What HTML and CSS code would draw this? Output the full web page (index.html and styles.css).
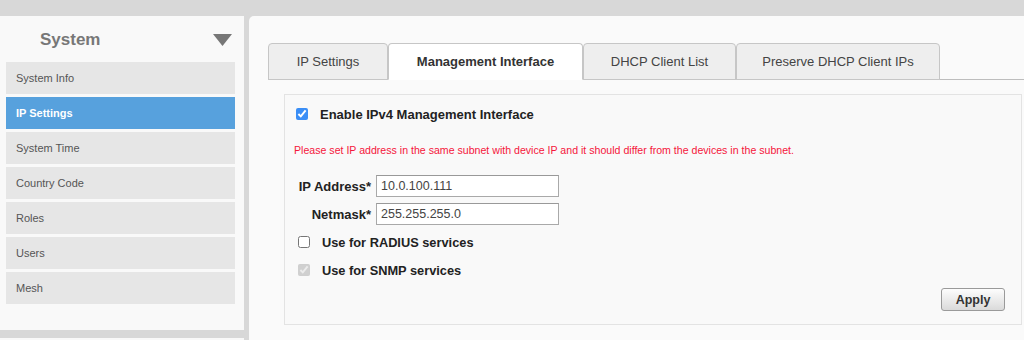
FILE: index.html
```html
<!DOCTYPE html>
<html lang="en">
<head>
    <meta charset="UTF-8">
    <meta name="viewport" content="width=device-width, initial-scale=1.0">
    <title>System - Management Interface</title>

    <link rel="stylesheet" href="styles.css">
</head>
<body>

  <div class="page">
    <div class="side">
      <div class="menu">
        <div class="menu-head">
          <span class="menu-title">System</span>
          <svg class="caret" width="19" height="12" viewBox="0 0 19 12"><polygon points="0,0 19,0 9.5,12" fill="#777"/></svg>
        </div>
        <a class="item">System Info</a>
        <a class="item active">IP Settings</a>
        <a class="item">System Time</a>
        <a class="item">Country Code</a>
        <a class="item">Roles</a>
        <a class="item">Users</a>
        <a class="item">Mesh</a>
      </div>
      <div class="menu menu-next"></div>
    </div>

    <div class="main">
      <ul class="tabs">
        <li class="tab tab-ip">IP Settings</li>
        <li class="tab tab-mgmt active">Management Interface</li>
        <li class="tab tab-dhcp">DHCP Client List</li>
        <li class="tab tab-keep">Preserve DHCP Client IPs</li>
      </ul>

      <div class="box">
        <label class="check check-main">
          <input type="checkbox" checked>
          <span>Enable IPv4 Management Interface</span>
        </label>

        <p class="warn">Please set IP address in the same subnet with device IP and it should differ from the devices in the subnet.</p>

        <div class="fields">
          <label class="field-label" for="ip">IP Address*</label>
          <input class="field" id="ip" type="text" value="10.0.100.111">
          <label class="field-label" for="mask">Netmask*</label>
          <input class="field" id="mask" type="text" value="255.255.255.0">
        </div>

        <label class="check check-radius">
          <input type="checkbox">
          <span>Use for RADIUS services</span>
        </label>
        <label class="check check-snmp">
          <input type="checkbox" checked disabled>
          <span>Use for SNMP services</span>
        </label>

        <div class="actions">
          <button class="apply">Apply</button>
        </div>
      </div>
    </div>
  </div>

</body>
</html>
```

FILE: styles.css
```css
html, body {
    margin: 0;
    padding: 0;
    height: 340px;
    overflow: hidden;
    background: #d8d8d8;
    font-family: "Liberation Sans", Arial, sans-serif;
    color: #333;
  }

  .page {
    display: flex;
    padding-top: 16px;
    height: 324px;
  }

  /* left menu */
  .side {
    width: 244px;
    display: flex;
    flex-direction: column;
    gap: 8px;
    flex: none;
  }

  .menu {
    flex: none;
    background: #f9f9f9;
    height: 314px;
    padding: 0 9px 0 6px;
    box-sizing: border-box;
    display: flex;
    flex-direction: column;
    gap: 3px;
  }

  .menu-next {
    height: 2px;
  }

  .menu-head {
    height: 43px;
    box-sizing: border-box;
    padding: 5px 3px 0 34px;
    display: flex;
    align-items: center;
    justify-content: space-between;
  }

  .menu-title {
    font-size: 17px;
    font-weight: bold;
    color: #777;
  }

  .item {
    display: block;
    height: 32px;
    line-height: 32px;
    padding-left: 10px;
    background: #e6e6e6;
    font-size: 11px;
    color: #555;
  }

  .item.active {
    background: #57a1dd;
    color: #fff;
    font-weight: bold;
  }

  /* right panel */
  .main {
    flex: 1;
    margin-left: 5px;
    background: #fafafa;
    border-top-left-radius: 5px;
    height: 324px;
  }

  .tabs {
    list-style: none;
    margin: 27px 0 0 19px;
    padding: 0;
    display: flex;
    border-bottom: 1px solid #bdbdbd;
  }

  .tab {
    box-sizing: border-box;
    height: 37px;
    line-height: 36px;
    margin-bottom: -1px;
    text-align: center;
    font-size: 13px;
    color: #444;
    background: #eeeeee;
    border: 1px solid #c6c6c6;
    border-radius: 4px 4px 0 0;
  }

  .tab.active {
    background: #fff;
    border-bottom-color: #fff;
    font-weight: bold;
    color: #333;
  }

  .tab-ip { width: 120px; }
  .tab-mgmt { width: 195px; }
  .tab-dhcp { width: 153px; }
  .tab-keep { width: 204px; }

  .box {
    margin: 14px 2px 0 35px;
    height: 231px;
    box-sizing: border-box;
    border: 1px solid #e3e3e3;
    background: #f9f9f9;
    padding: 9px 16px 0 9px;
    display: flex;
    flex-direction: column;
  }

  .check {
    display: flex;
    align-items: center;
    height: 20px;
    font-size: 13px;
    font-weight: bold;
    color: #222;
  }

  .check input {
    margin: 0 12px 0 0;
    width: 12px;
    height: 12px;
    accent-color: #3a8ef6;
  }

  .check-main input { margin-left: 2px; }
  .check-radius, .check-snmp { font-size: 12.8px; }
  .check-radius input, .check-snmp input { margin-left: 4px; }
  .check-radius { margin-top: 7px; }
  .check-snmp { margin-top: 8px; }

  .warn {
    margin: 18px 0 0 0;
    line-height: 16px;
    font-size: 10.6px;
    color: #f5163b;
  }

  .fields {
    margin-top: 17px;
    display: grid;
    grid-template-columns: 77px 183px;
    column-gap: 5px;
    row-gap: 6px;
    align-items: center;
  }

  .field-label {
    text-align: right;
    font-size: 13px;
    font-weight: bold;
    color: #222;
  }

  .field {
    box-sizing: border-box;
    height: 22px;
    border: 1px solid #a9a9a9;
    border-top-color: #999;
    background: #fff;
    padding: 0 4px;
    font-family: "Liberation Sans", Arial, sans-serif;
    font-size: 12.5px;
    color: #444;
  }

  .actions {
    margin-top: 8px;
    display: flex;
    justify-content: flex-end;
  }

  .apply {
    width: 64px;
    height: 23px;
    border: 1px solid #9a9a9a;
    border-radius: 3px;
    background: linear-gradient(#fdfdfd, #dadada);
    font-family: "Liberation Sans", Arial, sans-serif;
    font-size: 12.5px;
    font-weight: bold;
    color: #333;
  }
```
